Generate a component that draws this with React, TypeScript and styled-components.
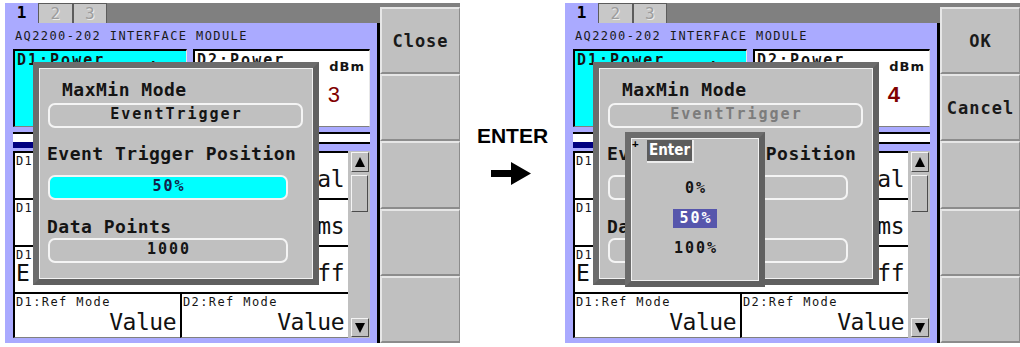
import React from "react";
import styled, { createGlobalStyle, css } from "styled-components";

const LAVENDER = "#aaaaff";
const PANEL_GRAY = "#c0c0c0";
const MONO = `"DejaVu Sans Mono", "Liberation Mono", monospace`;

const GlobalStyle = createGlobalStyle`
  * { box-sizing: border-box; }
  html, body { margin: 0; padding: 0; background: #fff; overflow: hidden; }
  body { font-family: ${MONO}; color: #141414; }
`;

const Page = styled.div`
  width: 1020px;
  height: 347px;
  display: flex;
  align-items: flex-start;
  padding: 3px 0 0 5px;
`;

const Screen = styled.div`
  position: relative;
  flex: none;
  width: 455px;
  height: 340px;
  display: flex;
`;

const MainCol = styled.div`
  width: 375px;
  display: flex;
  flex-direction: column;
`;

const TabStrip = styled.div`
  height: 20px;
  display: flex;
  background: #808080;
`;

const Tab = styled.div<{ $active?: boolean }>`
  width: ${(p) => (p.$active ? 33 : 34.5)}px;
  display: flex;
  align-items: center;
  justify-content: center;
  font-size: 16px;
  line-height: 1;
  ${(p) =>
    p.$active
      ? css`
          background: ${LAVENDER};
          color: #000;
          font-weight: bold;
        `
      : css`
          background: #c8c8c8;
          color: #9c9c9c;
          border: 1px solid #5c5c5c;
          border-bottom: 0;
          text-shadow: 1px 1px 0 #ececec;
        `}
`;

const Panel = styled.div`
  flex: 1;
  display: flex;
  flex-direction: column;
  background: ${LAVENDER};
  border-right: 3px solid #000;
  padding: 0 7px 5px 8px;
`;

const Title = styled.div`
  height: 26px;
  display: flex;
  align-items: center;
  padding-left: 2px;
  font-size: 12px;
  letter-spacing: 1.4px;
  color: #1a1a1a;
`;

const TopBoxes = styled.div`
  height: 78px;
  display: grid;
  grid-template-columns: 174px 177px;
  gap: 6px;
`;

const ReadingBox = styled.div<{ $cyan?: boolean }>`
  display: flex;
  flex-direction: column;
  background: ${(p) => (p.$cyan ? "#00ffff" : "#fff")};
  border-top: 2px solid #000;
  border-left: 2px solid #000;
  border-right: 1px solid #e8e8e8;
  border-bottom: 1px solid #808080;
  padding: 1px 4px 0 2px;
`;

const BoxHeader = styled.div`
  display: flex;
  justify-content: space-between;
  align-items: flex-start;
`;

const BoxLabel = styled.div`
  margin-top: 1px;
  font-size: 15px;
  font-weight: bold;
  line-height: 14px;
  letter-spacing: 2px;
`;

const Units = styled.div`
  margin-top: 8px;
  font-family: "DejaVu Sans", sans-serif;
  font-size: 13px;
  font-weight: bold;
  line-height: 13px;
  letter-spacing: 1px;
`;

const Reading = styled.div<{ $bold?: boolean }>`
  margin-top: 10px;
  padding-right: 16px;
  text-align: right;
  font-family: "Liberation Sans", Arial, sans-serif;
  font-size: 22px;
  font-weight: ${(p) => (p.$bold ? "bold" : "normal")};
  line-height: 24px;
  letter-spacing: 9px;
  color: #800000;
`;

const Separator = styled.div`
  margin-top: 5px;
  display: flex;
  flex-direction: column;
`;

const SepBand = styled.div`
  height: 10px;
  background: #fff;
  border-top: 2px solid #000;
`;

const SepTrack = styled.div`
  height: 6px;
  display: flex;
`;

const SepMark = styled.div`
  width: 150px;
  background: #000080;
`;

const SepRule = styled.div`
  flex: 1;
  height: 2px;
  background: #000;
`;

const ListArea = styled.div`
  margin-top: 3px;
  height: 187px;
  display: grid;
  grid-template-columns: 1fr 22px;
`;

const RowsCol = styled.div`
  display: flex;
  flex-direction: column;
`;

const ParamRow = styled.div`
  height: 47px;
  display: grid;
  grid-template-columns: 165px 1fr;
  background: #fff;
  border-top: 2px solid #000;
  border-left: 2px solid #000;
`;

const FootRow = styled.div`
  height: 46px;
  display: grid;
  grid-template-columns: 167px 1fr;
`;

const FootBox = styled.div`
  display: flex;
  flex-direction: column;
  background: #fff;
  border-top: 2px solid #000;
  border-left: 2px solid #000;
  border-bottom: 1px solid #808080;
  padding: 0 4px 0 1px;
  min-width: 0;
`;

const Cell = styled.div`
  min-width: 0;
  display: flex;
  flex-direction: column;
  padding: 0 4px 0 1px;
`;

const CellLabel = styled.div`
  padding-top: 2px;
  font-size: 12px;
  line-height: 12px;
  letter-spacing: 1.4px;
  white-space: nowrap;
  overflow: hidden;
`;

const CellValue = styled.div<{ $gap?: number; $start?: boolean }>`
  display: flex;
  justify-content: ${(p) => (p.$start ? "flex-start" : "flex-end")};
  margin-top: ${(p) => p.$gap ?? 0}px;
  font-size: 23px;
  line-height: 24px;
  letter-spacing: -0.5px;
  white-space: pre;
  color: #111;
`;

const ScrollBar = styled.div`
  display: flex;
  flex-direction: column;
  background: ${PANEL_GRAY};
  padding: 1px 1px 1px 3px;
`;

const bevel = css`
  background: ${PANEL_GRAY};
  border: 1px solid;
  border-color: #f4f4f4 #4c4c4c #4c4c4c #f4f4f4;
`;

const ScrollButton = styled.div<{ $h: number }>`
  ${bevel};
  height: ${(p) => p.$h}px;
  display: flex;
  align-items: center;
  justify-content: center;
`;

const ScrollThumb = styled.div`
  ${bevel};
  height: 37px;
  margin: 3px 1px 0 0;
`;

const ScrollSpacer = styled.div`
  flex: 1;
`;

const SoftKeys = styled.div`
  width: 80px;
  display: flex;
  flex-direction: column;
  background: #808080;
  padding-top: 4px;
`;

const SoftKey = styled.div`
  flex: 1;
  display: flex;
  align-items: center;
  justify-content: center;
  background: ${PANEL_GRAY};
  border-top: 2px solid #e6e6e6;
  border-left: 2px solid #e6e6e6;
  border-bottom: 2px solid #8c8c8c;
  border-right: 1px solid #8c8c8c;
  font-size: 17px;
  font-weight: bold;
  letter-spacing: 1px;
  color: #1a1a1a;
`;

const Dialog = styled.div`
  position: absolute;
  left: 28px;
  top: 59px;
  width: 286px;
  height: 223px;
  display: flex;
  flex-direction: column;
  align-items: flex-start;
  background: ${PANEL_GRAY};
  border: 6px solid #6c6c6c;
  border-right-color: #606060;
  border-bottom-color: #606060;
  box-shadow: inset 1px 1px 0 #f2f2f2, inset -1px -1px 0 #f2f2f2;
`;

const DlgLabel = styled.div<{ $top: number; $left: number }>`
  margin: ${(p) => p.$top}px 0 0 ${(p) => p.$left}px;
  font-size: 18px;
  font-weight: bold;
  line-height: 20px;
  letter-spacing: 0.5px;
  white-space: nowrap;
  color: #141414;
`;

const Field = styled.div<{ $top: number; $w: number; $focus?: boolean; $dim?: boolean }>`
  margin: ${(p) => p.$top}px 0 0 9px;
  width: ${(p) => p.$w}px;
  height: 25px;
  border: 2px solid #f4f4f4;
  border-radius: 7px;
  background: ${(p) => (p.$focus ? "#00ffff" : PANEL_GRAY)};
  padding-left: 2px;
  text-align: center;
  font-size: 15px;
  font-weight: bold;
  line-height: 19px;
  letter-spacing: 2px;
  color: ${(p) => (p.$dim ? "#7c7c7c" : p.$focus ? "#14204a" : "#141414")};
`;

const Popup = styled.div`
  position: absolute;
  left: 60px;
  top: 129px;
  width: 140px;
  height: 155px;
  display: flex;
  flex-direction: column;
  background: ${PANEL_GRAY};
  border: 6px solid #6c6c6c;
  border-right-color: #606060;
  border-bottom-color: #606060;
  box-shadow: inset 1px 1px 0 #f2f2f2, inset -1px -1px 0 #f2f2f2;
`;

const PopHead = styled.div`
  display: flex;
  align-items: flex-start;
  padding: 2px 0 0 1px;
`;

const PlusMark = styled.div`
  width: 15px;
  font-size: 11px;
  font-weight: bold;
  line-height: 8px;
  color: #000;
`;

const EnterTag = styled.div`
  height: 23px;
  padding: 0 2px;
  background: #5c5c5c;
  border-right: 2px solid #ececec;
  border-bottom: 2px solid #ececec;
  font-family: "DejaVu Sans Condensed", "DejaVu Sans", sans-serif;
  font-stretch: condensed;
  font-size: 15px;
  font-weight: bold;
  line-height: 21px;
  color: #fff;
`;

const OptionList = styled.div`
  margin-top: 16px;
  display: flex;
  flex-direction: column;
  align-items: center;
  gap: 11px;
`;

const Option = styled.div<{ $selected?: boolean }>`
  height: 19px;
  padding: 0 4px 0 6px;
  font-size: 15px;
  font-weight: bold;
  line-height: 19px;
  letter-spacing: 2px;
  background: ${(p) => (p.$selected ? "#5656ac" : "transparent")};
  color: ${(p) => (p.$selected ? "#fff" : "#141414")};
`;

const Middle = styled.div`
  flex: none;
  width: 105px;
  height: 340px;
  display: flex;
  flex-direction: column;
  align-items: center;
  padding-top: 122px;
`;

const EnterCaption = styled.div`
  font-family: "Liberation Sans", Arial, sans-serif;
  font-size: 21px;
  font-weight: bold;
  line-height: 21px;
  color: #000;
`;

const ArrowIcon = styled.svg`
  margin: 16px 4px 0 0;
`;

function Triangle({ down }: { down?: boolean }) {
  return (
    <svg width="10" height="11" viewBox="0 0 10 11">
      {down ? (
        <polygon points="0,1 10,1 5,11" fill="#000" />
      ) : (
        <polygon points="5,0 10,10 0,10" fill="#000" />
      )}
    </svg>
  );
}

const rows = [
  { d1: "D1:Range Mode", v1: "Manual", d2: "D2:Range Mode", v2: "Manual" },
  { d1: "D1:Avg Time", v1: "100ms", d2: "D2:Avg Time", v2: "100ms" },
  { d1: "D1:MaxMin Mode", v1: "E  Ext", start: true, d2: "D2:MaxMin Mode", v2: "Off" },
];

type ScreenProps = {
  reading: string;
  boldReading?: boolean;
  keys: string[];
  picking?: boolean;
};

function InstrumentScreen({ reading, boldReading, keys, picking }: ScreenProps) {
  return (
    <Screen>
      <MainCol>
        <TabStrip>
          <Tab $active>1</Tab>
          <Tab>2</Tab>
          <Tab>3</Tab>
        </TabStrip>
        <Panel>
          <Title>AQ2200-202 INTERFACE MODULE</Title>
          <TopBoxes>
            <ReadingBox $cyan>
              <BoxHeader>
                <BoxLabel>D1:Power</BoxLabel>
                <Units>dBm</Units>
              </BoxHeader>
              <Reading>-10.12</Reading>
            </ReadingBox>
            <ReadingBox>
              <BoxHeader>
                <BoxLabel>D2:Power</BoxLabel>
                <Units>dBm</Units>
              </BoxHeader>
              <Reading $bold={boldReading}>{reading}</Reading>
            </ReadingBox>
          </TopBoxes>
          <Separator>
            <SepBand />
            <SepTrack>
              <SepMark />
              <SepRule />
            </SepTrack>
          </Separator>
          <ListArea>
            <RowsCol>
              {rows.map((r) => (
                <ParamRow key={r.d1}>
                  <Cell>
                    <CellLabel>{r.d1}</CellLabel>
                    <CellValue $start={r.start}>{r.v1}</CellValue>
                  </Cell>
                  <Cell>
                    <CellLabel>{r.d2}</CellLabel>
                    <CellValue>{r.v2}</CellValue>
                  </Cell>
                </ParamRow>
              ))}
              <FootRow>
                <FootBox>
                  <CellLabel>D1:Ref Mode</CellLabel>
                  <CellValue $gap={2}>Value</CellValue>
                </FootBox>
                <FootBox>
                  <CellLabel>D2:Ref Mode</CellLabel>
                  <CellValue $gap={2}>Value</CellValue>
                </FootBox>
              </FootRow>
            </RowsCol>
            <ScrollBar>
              <ScrollButton $h={20}>
                <Triangle />
              </ScrollButton>
              <ScrollThumb />
              <ScrollSpacer />
              <ScrollButton $h={19}>
                <Triangle down />
              </ScrollButton>
            </ScrollBar>
          </ListArea>
        </Panel>
      </MainCol>
      <SoftKeys>
        {keys.map((k, i) => (
          <SoftKey key={i}>{k}</SoftKey>
        ))}
      </SoftKeys>

      <Dialog>
        <DlgLabel $top={12} $left={23}>MaxMin Mode</DlgLabel>
        <Field $top={3} $w={255} $dim={picking}>
          EventTrigger
        </Field>
        <DlgLabel $top={16} $left={8}>Event Trigger Position</DlgLabel>
        <Field $top={11} $w={240} $focus={!picking}>
          50%
        </Field>
        <DlgLabel $top={17} $left={8}>Data Points</DlgLabel>
        <Field $top={1} $w={240}>
          1000
        </Field>
      </Dialog>

      {picking && (
        <Popup>
          <PopHead>
            <PlusMark>+</PlusMark>
            <EnterTag>Enter</EnterTag>
          </PopHead>
          <OptionList>
            <Option>0%</Option>
            <Option $selected>50%</Option>
            <Option>100%</Option>
          </OptionList>
        </Popup>
      )}
    </Screen>
  );
}

export default function App() {
  return (
    <>
      <GlobalStyle />
      <Page>
        <InstrumentScreen reading="-10.53" keys={["Close", "", "", "", ""]} />
        <Middle>
          <EnterCaption>ENTER</EnterCaption>
          <ArrowIcon width="40" height="23" viewBox="0 0 40 23">
            <polygon points="0,8 20,8 20,0 40,11.5 20,23 20,15 0,15" fill="#000" />
          </ArrowIcon>
        </Middle>
        <InstrumentScreen
          reading="-10.54"
          boldReading
          keys={["OK", "Cancel", "", "", ""]}
          picking
        />
      </Page>
    </>
  );
}
